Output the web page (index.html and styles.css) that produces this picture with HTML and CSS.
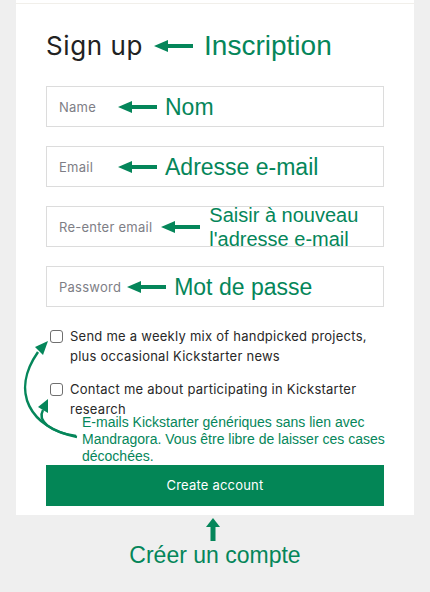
FILE: index.html
```html
<!DOCTYPE html>
<html>
<head>
    <meta charset="utf-8" />
    <title>Sign up</title>
    <link rel="stylesheet" href="styles.css">
</head>
<body>
<div class="card">
    <div class="card_top"></div>

    <div class="row tit_row">
        <h1 class="tit">Sign up</h1>
        <svg class="arrow arrow_tit" width="39" height="12" viewBox="0 0 39 12"><polygon points="0,6 14,0 14,12" /><rect x="13" y="4" width="26" height="4" /></svg>
        <span class="note note_big">Inscription</span>
    </div>

    <div class="field">
        <span class="ph ph_fixed">Name</span>
        <svg class="arrow" width="39" height="12" viewBox="0 0 39 12"><polygon points="0,6 14,0 14,12" /><rect x="13" y="4" width="26" height="4" /></svg>
        <span class="note">Nom</span>
    </div>
    <div class="field">
        <span class="ph ph_fixed">Email</span>
        <svg class="arrow" width="39" height="12" viewBox="0 0 39 12"><polygon points="0,6 14,0 14,12" /><rect x="13" y="4" width="26" height="4" /></svg>
        <span class="note">Adresse e-mail</span>
    </div>
    <div class="field">
        <span class="ph">Re-enter email</span>
        <svg class="arrow arrow_re" width="39" height="12" viewBox="0 0 39 12"><polygon points="0,6 14,0 14,12" /><rect x="13" y="4" width="26" height="4" /></svg>
        <span class="note note_two">Saisir à nouveau<br>l'adresse e-mail</span>
    </div>
    <div class="field">
        <span class="ph">Password</span>
        <svg class="arrow arrow_near" width="39" height="12" viewBox="0 0 39 12"><polygon points="0,6 14,0 14,12" /><rect x="13" y="4" width="26" height="4" /></svg>
        <span class="note">Mot de passe</span>
    </div>

    <div class="opts">
        <label class="opt"><span class="box"></span><span>Send me a weekly mix of handpicked projects, plus occasional Kickstarter news</span></label>
        <label class="opt"><span class="box"></span><span>Contact me about participating in Kickstarter research</span></label>
        <p class="note_small">E-mails Kickstarter génériques sans lien avec Mandragora. Vous être libre de laisser ces cases décochées.</p>
    </div>

    <div class="btn">Create account</div>

    <svg class="curves" width="100" height="470" viewBox="16 0 100 470">
        <path d="M77,437 C30,428 10,392 38,352" />
        <polygon points="48,341 43,355 35,347" />
        <path d="M76,436 C50,432 37,421 43,410" />
        <polygon points="48,399 48,413 38,407" />
    </svg>
</div>

<div class="foot">
    <svg class="arrow_up" width="14" height="23" viewBox="0 0 14 23"><polygon points="7,0 14,9 0,9" /><rect x="4.5" y="8" width="5" height="15" /></svg>
    <span class="note">Créer un compte</span>
</div>
</body>
</html>
```

FILE: styles.css
```css
body {margin:0;background-color:#efefef;font:13px/20px Inter, "Liberation Sans", sans-serif;color:#282828;}
.card {position:relative;width:338px;margin-left:16px;padding:0 30px 9px;background-color:#FFFFFF;}
.card_top {height:3px;margin:0 -30px;border-bottom:1px solid #f1efea;}
.row {display:flex;align-items:center;}
.tit_row {height:32px;margin-top:26px;margin-bottom:24px;}
.tit {margin:0;font-size:26px;font-weight:400;line-height:32px;letter-spacing:0.6px;color:#222222;}
.arrow {flex:none;fill:#05865a;}
.arrow_tit {margin-left:11px;}
.note {font-family:"Liberation Sans", Arial, sans-serif;font-size:23px;line-height:26px;color:#05865a;margin-left:8px;}
.note_big {margin-left:11px;font-size:28px;line-height:32px;}
.note_two {font-size:20px;line-height:24px;margin-left:9px;}
.field {display:flex;align-items:center;height:39px;padding-left:12px;margin-bottom:19px;border:1px solid #dcdcdc;}
.ph {font-size:13px;letter-spacing:0.25px;color:#7e7e86;}
.ph_fixed {width:59px;}
.arrow_re {margin-left:9px;}
.arrow_near {margin-left:6px;}
.opts {margin-top:18px;}
.opt {display:flex;align-items:flex-start;gap:7px;padding-left:4px;margin-bottom:13px;letter-spacing:0.25px;}
.opt:nth-child(2) {margin-bottom:0;}
.box {flex:none;width:11px;height:11px;margin-top:4px;border:1px solid #6f6f6f;border-radius:3px;}
.note_small {margin:-5px -14px 0 36px;font-family:"Liberation Sans", Arial, sans-serif;font-size:14px;line-height:17px;color:#05865a;}
.btn {height:41px;line-height:41px;text-align:center;letter-spacing:0.2px;color:#FFFFFF;background-color:#038656;}
.curves {position:absolute;left:0;top:0;}
.curves path {fill:none;stroke:#05865a;stroke-width:2.5;}
.curves polygon {fill:#05865a;}
.foot {display:flex;flex-direction:column;align-items:center;width:430px;padding-top:3px;}
.arrow_up {margin-left:-4px;fill:#05865a;}
.foot .note {margin:3px 0 0 0;line-height:23px;}
```
